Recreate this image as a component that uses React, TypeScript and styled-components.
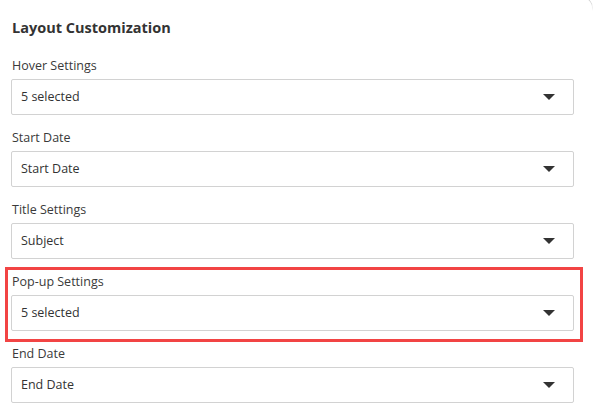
import React from "react";
import styled, { createGlobalStyle } from "styled-components";

const GlobalStyle = createGlobalStyle`
  html, body {
    margin: 0;
    padding: 0;
    background: #ffffff;
  }
  body {
    font-family: "Open Sans", "Liberation Sans", sans-serif;
    color: #333333;
  }
`;

interface FieldData {
  label: string;
  value: string;
  highlighted?: boolean;
}

const fields: FieldData[] = [
  { label: "Hover Settings", value: "5 selected" },
  { label: "Start Date", value: "Start Date" },
  { label: "Title Settings", value: "Subject" },
  { label: "Pop-up Settings", value: "5 selected", highlighted: true },
  { label: "End Date", value: "End Date" },
];

const Caret = () => (
  <svg width="12" height="6" viewBox="0 0 12 6">
    <path d="M0 0 H12 L6 6 Z" fill="#333333" />
  </svg>
);

const App: React.FC = () => {
  return (
    <>
      <GlobalStyle />
      <Panel>
        <Title>Layout Customization</Title>
        <FieldList>
          {fields.map((f) => (
            <Field key={f.label} $highlighted={f.highlighted}>
              <Label>{f.label}</Label>
              <Select>
                <span>{f.value}</span>
                <Caret />
              </Select>
            </Field>
          ))}
        </FieldList>
      </Panel>
    </>
  );
};
export default App;

const Panel = styled.div`
  position: relative;
  width: 594px;
  height: 408px;
  box-sizing: border-box;
  padding: 18px 14px 0 8px;
  overflow: hidden;

  /* rounded corner of the surrounding card */
  &::after {
    content: "";
    position: absolute;
    top: -4px;
    right: 1px;
    width: 14px;
    height: 14px;
    border-top: 1px solid #d4d4d4;
    border-right: 1px solid #d4d4d4;
    border-top-right-radius: 12px;
    -webkit-mask-image: linear-gradient(to bottom, #000 40%, transparent 100%);
    mask-image: linear-gradient(to bottom, #000 40%, transparent 100%);
  }
`;

const Title = styled.h2`
  margin: 0 0 16px 4px;
  font-size: 14.5px;
  line-height: 20px;
  font-weight: 700;
  color: #333333;
`;

const FieldList = styled.div`
  display: flex;
  flex-direction: column;
  gap: 3px;
`;

const Field = styled.div<{ $highlighted?: boolean }>`
  display: flex;
  flex-direction: column;
  gap: 3px;
  padding: 2px 6px 8px 3px;
  outline: ${({ $highlighted }) => ($highlighted ? "3px solid #f24444" : "none")};
`;

const Label = styled.label`
  font-size: 12.5px;
  line-height: 20px;
  color: #3a3a3a;
  padding-left: 1px;
`;

const Select = styled.div`
  display: flex;
  align-items: center;
  justify-content: space-between;
  height: 36px;
  box-sizing: border-box;
  padding: 0 18px 0 9px;
  border: 1px solid #d2d2d2;
  border-radius: 2px;
  background: #ffffff;
  font-size: 12.5px;
  color: #333333;

  span {
    margin-top: -1px;
  }
`;
